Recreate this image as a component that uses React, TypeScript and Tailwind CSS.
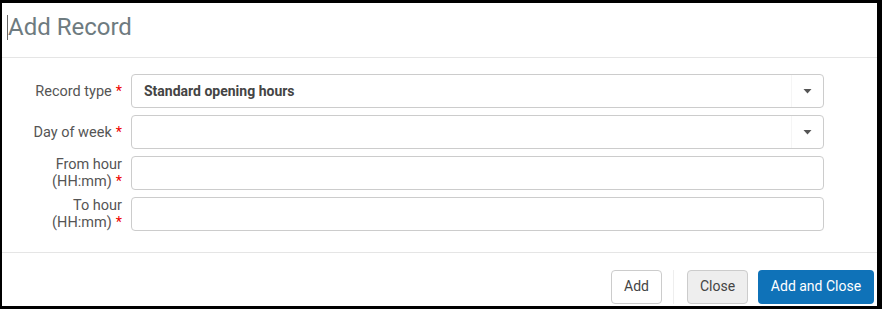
import React from 'react';

const fields = [
  { label: ['Record type'], value: 'Standard opening hours', select: true },
  { label: ['Day of week'], value: '', select: true },
  { label: ['From hour', '(HH:mm)'], value: '', select: false },
  { label: ['To hour', '(HH:mm)'], value: '', select: false },
];

function Caret() {
  return (
    <svg width="9" height="5" viewBox="0 0 9 5">
      <path d="M0.5 0h8L4.5 4.5z" fill="#555" />
    </svg>
  );
}

export default function App() {
  return (
    <div
      className="w-[882px] h-[309px] bg-black pt-[3px] pl-[2px] pr-[5px] pb-[3px]"
      style={{ fontFamily: 'Roboto, "Liberation Sans", sans-serif' }}
    >
      <div className="bg-white h-full flex flex-col">
        <div className="h-[55px] border-b border-[#e5e5e5] flex items-center pl-[5px] pb-[6px]">
          <span className="w-px h-[25px] bg-[#666]" />
          <h1 className="text-[24px] text-[#6e7b80] font-normal leading-none">Add Record</h1>
        </div>
        <div className="flex flex-col gap-[7px] pt-[16px] pb-[22px] h-[195px] border-b border-[#e5e5e5]">
          {fields.map((f, i) => (
            <div key={i} className="flex items-center">
              <div className="w-[129px] pr-[9px] text-right text-[14.5px] leading-[17px] text-[#555]">
                {f.label.map((l, j) => (
                  <div key={j}>
                    {l}
                    {j === f.label.length - 1 && <span className="text-[#e00] ml-[4px]">*</span>}
                  </div>
                ))}
              </div>
              <div className="w-[693px] h-[34px] border border-[#ccc] rounded-[4px] flex items-center">
                <span className="flex-1 pl-[12px] text-[14px] font-bold text-[#444]">{f.value}</span>
                {f.select && (
                  <span className="w-[32px] h-full border-l border-[#f5f5f5] flex items-center justify-center">
                    <Caret />
                  </span>
                )}
              </div>
            </div>
          ))}
        </div>
        <div className="flex-1 flex items-center justify-end pr-[3px] pt-[14px] text-[14px]">
          <button className="h-[34px] w-[51px] border border-[#ccc] rounded-[4px] bg-white text-[#444]">Add</button>
          <span className="w-px h-[34px] bg-[#eee] ml-[11px] mr-[13px]" />
          <button className="h-[34px] w-[61px] border border-[#ccc] rounded-[4px] bg-[#eee] text-[#444]">Close</button>
          <button className="h-[34px] w-[116px] ml-[10px] rounded-[4px] bg-[#0f72b8] text-white">Add and Close</button>
        </div>
      </div>
    </div>
  );
}
